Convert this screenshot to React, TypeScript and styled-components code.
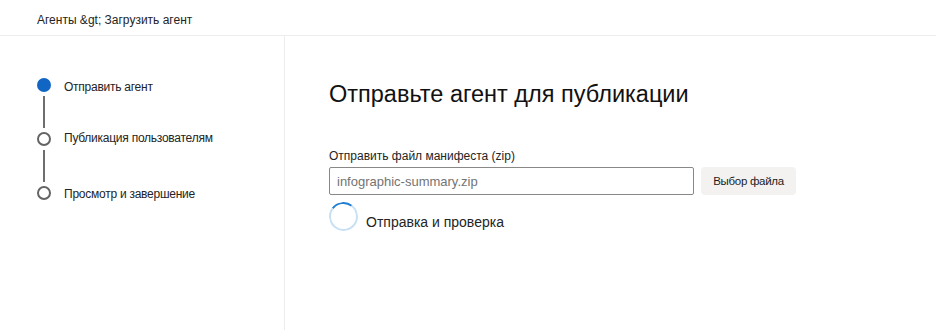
import React from "react";
import styled, { createGlobalStyle } from "styled-components";

const GlobalStyle = createGlobalStyle`
  html, body { margin: 0; padding: 0; background: #ffffff; }
  body { font-family: "Liberation Sans", Arial, sans-serif; color: #242424; }
  * { box-sizing: border-box; }
`;

const Page = styled.div`
  width: 936px;
  height: 330px;
  display: flex;
  flex-direction: column;
  overflow: hidden;
`;

const Header = styled.header`
  height: 36px;
  flex: 0 0 36px;
  border-bottom: 1px solid #efedeb;
  padding: 13px 0 0 37px;
  font-size: 12px;
  color: #242424;
`;

const Body = styled.div`
  flex: 1;
  display: flex;
`;

const Sidebar = styled.nav`
  width: 285px;
  flex: 0 0 285px;
  border-right: 1px solid #efedeb;
  padding: 42px 0 0 37px;
  display: flex;
  flex-direction: column;
`;

const StepRow = styled.div`
  display: flex;
  align-items: center;
  gap: 13px;
  height: 14px;
`;

const Dot = styled.span<{ $active?: boolean }>`
  width: 14px;
  height: 14px;
  border-radius: 50%;
  flex: 0 0 14px;
  background: ${(p) => (p.$active ? "#1166c4" : "#ffffff")};
  border: ${(p) => (p.$active ? "none" : "2px solid #646464")};
`;

const StepLabel = styled.span<{ $shift: number }>`
  font-size: 12px;
  letter-spacing: -0.25px;
  color: #242424;
  margin-top: ${(p) => p.$shift}px;
`;

const Connector = styled.span`
  width: 2px;
  height: 32px;
  margin: 4px 0 4px 6px;
  background: #6e6e6e;
`;

const Main = styled.main`
  flex: 1;
  padding: 44px 0 0 44px;
  display: flex;
  flex-direction: column;
`;

const Title = styled.h1`
  margin: 0;
  font-weight: 400;
  font-size: 23.5px;
  color: #111111;
  line-height: 28px;
`;

const FieldLabel = styled.label`
  margin-top: 40px;
  font-size: 12px;
  color: #242424;
  line-height: 16px;
`;

const FieldRow = styled.div`
  display: flex;
  gap: 7px;
  margin-top: 3px;
`;

const FileInput = styled.div`
  width: 365px;
  height: 28px;
  border: 1px solid #8a8886;
  border-radius: 2px;
  padding: 0 7px;
  display: flex;
  align-items: center;
  font-size: 13px;
  color: #737373;
`;

const PickButton = styled.button`
  width: 95px;
  height: 28px;
  border: none;
  border-radius: 4px;
  background: #f3f2f1;
  font-family: inherit;
  font-size: 11.5px;
  letter-spacing: -0.3px;
  color: #1b1b1b;
  padding: 0;
`;

const Status = styled.div`
  display: flex;
  align-items: flex-start;
  gap: 8px;
  margin-top: 7px;
`;

const Spinner = styled.span`
  width: 29px;
  height: 29px;
  flex: 0 0 29px;
  border-radius: 50%;
  border: 2.5px solid #c7e0f4;
  border-top-color: #1f7fd1;
  transform: rotate(-8deg);
`;

const StatusText = styled.span`
  font-size: 14px;
  line-height: 16px;
  color: #242424;
  margin-top: 12px;
`;

const steps = [
  { label: "Отправить агент", active: true, shift: 3 },
  { label: "Публикация пользователям", active: false, shift: -2 },
  { label: "Просмотр и завершение", active: false, shift: 1 },
];

export default function App() {
  return (
    <>
      <GlobalStyle />
      <Page>
        <Header>Агенты &amp;gt; Загрузить агент</Header>
        <Body>
          <Sidebar>
            {steps.map((s, i) => (
              <React.Fragment key={s.label}>
                {i > 0 && <Connector />}
                <StepRow>
                  <Dot $active={s.active} />
                  <StepLabel $shift={s.shift}>{s.label}</StepLabel>
                </StepRow>
              </React.Fragment>
            ))}
          </Sidebar>
          <Main>
            <Title>Отправьте агент для публикации</Title>
            <FieldLabel>Отправить файл манифеста (zip)</FieldLabel>
            <FieldRow>
              <FileInput>infographic-summary.zip</FileInput>
              <PickButton>Выбор файла</PickButton>
            </FieldRow>
            <Status>
              <Spinner />
              <StatusText>Отправка и проверка</StatusText>
            </Status>
          </Main>
        </Body>
      </Page>
    </>
  );
}
